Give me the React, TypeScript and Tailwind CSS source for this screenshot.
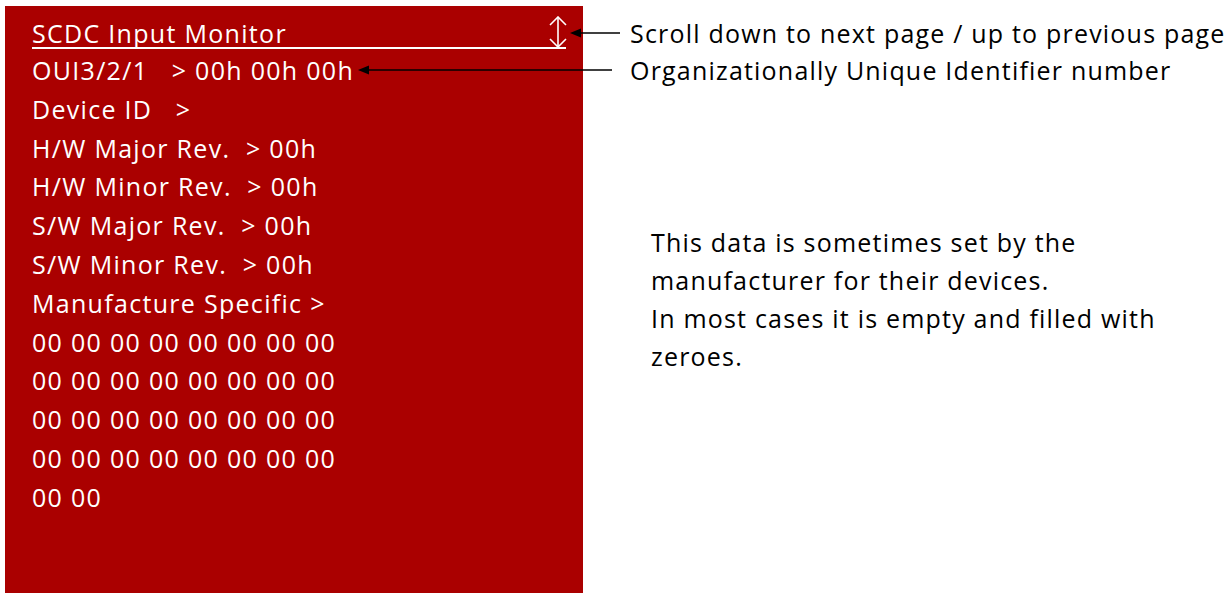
const rows = [
  "OUI3/2/1\u00a0\u00a0\u00a0> 00h 00h 00h",
  "Device ID\u00a0\u00a0\u00a0>",
  "H/W Major Rev.\u00a0\u00a0> 00h",
  "H/W Minor Rev.\u00a0\u00a0> 00h",
  "S/W Major Rev.\u00a0\u00a0> 00h",
  "S/W Minor Rev.\u00a0\u00a0> 00h",
  "Manufacture Specific >",
  "00 00 00 00 00 00 00 00",
  "00 00 00 00 00 00 00 00",
  "00 00 00 00 00 00 00 00",
  "00 00 00 00 00 00 00 00",
  "00 00",
];

const Pointer = ({ width }: { width: number }) => (
  <svg width={width} height="12" viewBox={`0 0 ${width} 12`}>
    <line x1="8" y1="6" x2={width} y2="6" stroke="#000" strokeWidth="1.5" />
    <polygon points="0,6 11,1.5 11,10.5" fill="#000" />
  </svg>
);

const UpDown = () => (
  <svg width="20" height="32" viewBox="0 0 20 32" fill="none" stroke="#fff" strokeWidth="1.6">
    <line x1="10" y1="1" x2="10" y2="31" />
    <polyline points="2,9 10,1 18,9" />
    <polyline points="2,23 10,31 18,23" />
  </svg>
);

export default function App() {
  return (
    <div className="relative flex w-[1231px] h-[593px] bg-white overflow-hidden font-['Open_Sans',sans-serif] tracking-[1.3px]">
      {/* monitor page */}
      <div className="mt-[6px] ml-[5px] w-[578px] bg-[#aa0000] text-white pl-[27px] pr-[17px] pt-[13px]">
        <div className="relative border-b-2 border-white h-[30px] text-[25px] leading-[28px]">
          <span>SCDC Input Monitor</span>
          <div className="absolute right-[-2px] top-[-3px]">
            <UpDown />
          </div>
        </div>
        <div className="flex flex-col text-[25px] leading-[38.8px] mt-[2px]">
          {rows.map((r, i) => (
            <div key={i} className="whitespace-pre">{r}</div>
          ))}
        </div>
      </div>

      {/* notes */}
      <div className="flex flex-col pl-[47px] pt-[15px] text-black text-[25px] leading-[37px] tracking-[1.2px]">
        <div>Scroll down to next page / up to previous page</div>
        <div>Organizationally Unique Identifier number</div>
        <div className="pl-[21px] mt-[134px] leading-[38px]">
          <div>This data is sometimes set by the</div>
          <div>manufacturer for their devices.</div>
          <div>In most cases it is empty and filled with</div>
          <div>zeroes.</div>
        </div>
      </div>

      <div className="absolute left-[570px] top-[27px]">
        <Pointer width={50} />
      </div>
      <div className="absolute left-[358px] top-[64px]">
        <Pointer width={254} />
      </div>
    </div>
  );
}
